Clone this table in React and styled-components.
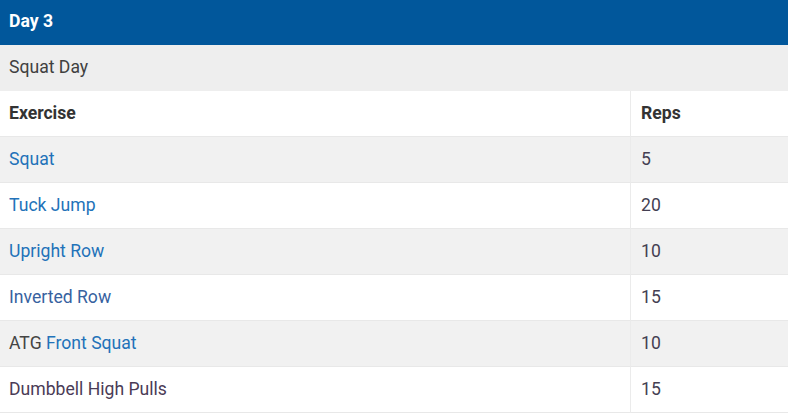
import React from "react";
import styled, { createGlobalStyle } from "styled-components";

const Global = createGlobalStyle`
  html, body { margin: 0; padding: 0; background: #fff; }
  body { font-family: Roboto, "Liberation Sans", Arial, sans-serif; }
`;

const Wrap = styled.div`
  width: 788px;
  overflow: hidden;
`;

const Title = styled.div`
  height: 45px;
  box-sizing: border-box;
  background: #01579b;
  color: #fff;
  font-weight: 700;
  font-size: 17.6px;
  display: flex;
  align-items: center;
  padding: 0 9px 4px;
`;

const Subtitle = styled.div`
  height: 46px;
  box-sizing: border-box;
  background: #eeeeee;
  color: #404040;
  font-size: 17.6px;
  display: flex;
  align-items: center;
  padding: 0 9px 2px;
`;

const Table = styled.div`
  display: grid;
  grid-template-columns: 631px 1fr;
  width: 800px;
`;

const Cell = styled.div`
  height: 46px;
  box-sizing: border-box;
  display: flex;
  align-items: center;
  padding: 0 9px 2px;
  font-size: 17.6px;
  font-weight: ${(p) => (p.$head ? 700 : 400)};
  color: #333;
  background: ${(p) => (p.$alt ? "#f1f1f1" : "#fff")};
  border-bottom: 1px solid #e8e8e8;
  border-right: ${(p) => (p.$first ? "1px solid #ebebeb" : "none")};
  ${(p) => (p.$second ? "padding-left: 10px;" : "")}
`;

const Link = styled.span`
  color: ${(p) => p.$c || "#2272b9"};
  white-space: pre;
`;

const Plain = styled.span`
  color: ${(p) => p.$c || "#444"};
  white-space: pre;
`;

const rows = [
  { name: [["Squat", "link"]], reps: "5" },
  { name: [["Tuck Jump", "link"]], reps: "20" },
  { name: [["Upright Row", "link"]], reps: "10" },
  { name: [["Inverted Row", "dlink"]], reps: "15" },
  { name: [["ATG ", "plain"], ["Front Squat", "link"]], reps: "10" },
  { name: [["Dumbbell High Pulls", "purple"]], reps: "15" },
];

const part = ([t, k], i) => {
  if (k === "link") return <Link key={i}>{t}</Link>;
  if (k === "dlink") return <Link key={i} $c="#3762a0">{t}</Link>;
  if (k === "purple") return <Plain key={i} $c="#4a3b56">{t}</Plain>;
  return <Plain key={i}>{t}</Plain>;
};

export default function App() {
  return (
    <Wrap>
      <Global />
      <Title>Day 3</Title>
      <Subtitle>Squat Day</Subtitle>
      <Table>
        <Cell $head $first>Exercise</Cell>
        <Cell $head $second>Reps</Cell>
        {rows.map((r, i) => (
          <React.Fragment key={i}>
            <Cell $first $alt={i % 2 === 0}>{r.name.map(part)}</Cell>
            <Cell $second $alt={i % 2 === 0}>
              <Plain $c="#443f52">{r.reps}</Plain>
            </Cell>
          </React.Fragment>
        ))}
      </Table>
    </Wrap>
  );
}
